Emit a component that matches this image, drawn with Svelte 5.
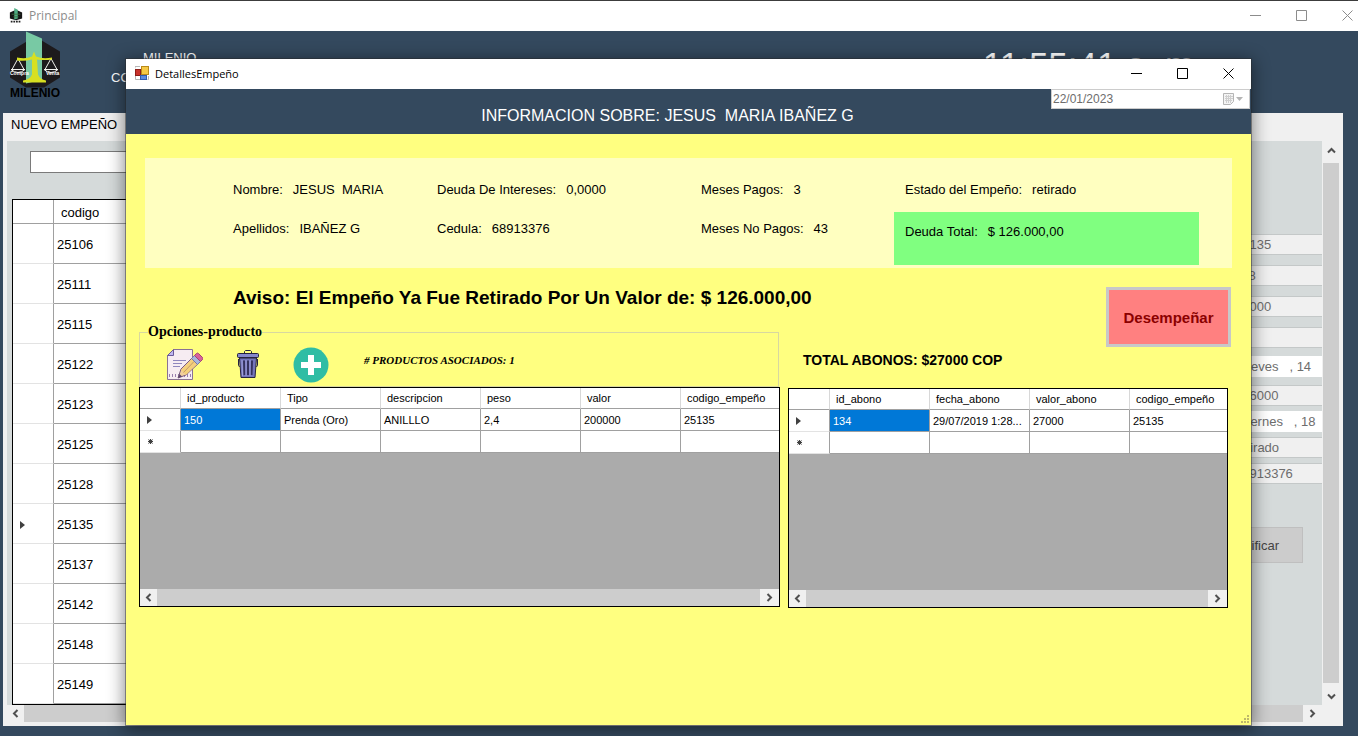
<script>
  const codes = ['25106', '25111', '25115', '25122', '25123', '25125', '25128', '25135', '25137', '25142', '25148', '25149'];
  const current = '25135';

  const fieldGroups = [
    { name: 'wide', fields: [['codigo', '25135'], ['peso', '118'], ['valor', '50000'], ['nota', '']] },
    { name: 'mid', fields: [['fecha inicio', 'jueves   , 14', true], ['deuda', '126000']] },
    { name: 'tight', fields: [['fecha fin', 'viernes   , 18', true], ['estado', 'retirado'], ['cedula', '68913376']] }
  ];

  const firstRow = [
    ['Nombre:', 'JESUS  MARIA'],
    ['Deuda De Intereses:', '0,0000'],
    ['Meses Pagos:', '3'],
    ['Estado del Empeño:', 'retirado']
  ];
  const secondRow = [
    ['Apellidos:', 'IBAÑEZ G'],
    ['Cedula:', '68913376'],
    ['Meses No Pagos:', '43'],
    ['Deuda Total:', '$ 126.000,00']
  ];

  const products = {
    head: ['id_producto', 'Tipo', 'descripcion', 'peso', 'valor', 'codigo_empeño'],
    row: ['150', 'Prenda (Oro)', 'ANILLLO', '2,4', '200000', '25135']
  };
  const payments = {
    head: ['id_abono', 'fecha_abono', 'valor_abono', 'codigo_empeño'],
    row: ['134', '29/07/2019 1:28...', '27000', '25135']
  };
</script>

{#snippet arrow(d)}
  <svg width="9" height="9" viewBox="0 0 9 9" fill="none" stroke="#505050" stroke-width="2"><path {d} /></svg>
{/snippet}

{#snippet hbar()}
  <div class="hbar">
    <button aria-label="Izquierda">{@render arrow('M6.5 1 3 4.500 6.500 8')}</button>
    <div class="thumb"></div>
    <button aria-label="Derecha">{@render arrow('M2.500 1 6 4.500 2.500 8')}</button>
  </div>
{/snippet}

{#snippet controls()}
  <div class="controls">
    <button aria-label="Minimizar"><svg width="11" height="11" viewBox="0 0 11 11" stroke="currentColor" fill="none"><path d="M0 5.500H11" /></svg></button>
    <button aria-label="Maximizar"><svg width="11" height="11" viewBox="0 0 11 11" stroke="currentColor" fill="none"><path d="M.5.5h10v10H.5z" /></svg></button>
    <button aria-label="Cerrar"><svg width="11" height="11" viewBox="0 0 11 11" stroke="currentColor" fill="none"><path d="M.5.5l10 10M10.500.5l-10 10" /></svg></button>
  </div>
{/snippet}

{#snippet marker()}
  <svg class="marker" width="5" height="8" viewBox="0 0 5 8" fill="#404040"><path d="M0 0 5 4 0 8z" /></svg>
{/snippet}

{#snippet grid(data)}
  <div class="datagrid">
    <div class="sheet">
      <table>
        <thead>
          <tr>
            <th class="rowhead" aria-label="Fila"></th>
            {#each data.head as h}<th>{h}</th>{/each}
          </tr>
        </thead>
        <tbody>
          <tr>
            <td class="rowhead">{@render marker()}</td>
            {#each data.row as c, i}<td class:selected={i === 0}>{c}</td>{/each}
          </tr>
          <tr>
            <td class="rowhead">
              <svg class="marker" width="7" height="7" viewBox="0 0 7 7" stroke="#404040" stroke-width="1"><circle cx="3.500" cy="3.500" r="1.500" fill="#404040" /><path d="M3.500 1v5M1 3.500h5M1.500 1.500l4 4M5.500 1.500l-4 4" /></svg>
            </td>
            {#each data.head as h}<td></td>{/each}
          </tr>
        </tbody>
      </table>
    </div>
    {@render hbar()}
  </div>
{/snippet}

{#snippet logo(size)}
  <svg width={size} height={Math.round(size * 1.25)} viewBox="0 0 54 67">
    <path d="M2 20 27 5 52 20V46L36 56H18L2 46z" fill="#1d1a1c" />
    <path d="M18 0 34 7V48L18 52z" fill="#78c9a4" />
    <g stroke="#f2f2ee" fill="none" stroke-width="1">
      <path d="M10 27 4 38M10 27l6 11M43 27l-6 11M43 27l6 11" />
      <path d="M3 38q7 6 14 0zM36 38q7 6 14 0z" />
    </g>
    <path d="M9 26q9 2 15-1l2-5 2 5q7 3 16 1v2q-8 1-15 0l1 15q2 5 8 6v2H15v-2q7-1 9-6l0-15q-7 2-15 1z" fill="#d8e021" />
    <text x="2" y="43" class="logo-side">Compra</text>
    <text x="38" y="43" class="logo-side">Venta</text>
    <text x="27" y="65" class="logo-name" text-anchor="middle">MILENIO</text>
  </svg>
{/snippet}

<div class="desktop">
  <header class="titlebar outer">
    <svg width="14" height="17" viewBox="0 0 16 17">
      <path d="M1 5 8 2 15 5V12L8 14 1 12z" fill="#151515" />
      <path d="M6 0 10 2V12L6 13z" fill="#4fae84" />
      <path d="M3 7h10M5 10h6" stroke="#3f6d40" />
      <path d="M2 15.500h12" stroke="#222" stroke-width="2" stroke-dasharray="2 1" />
    </svg>
    <span>Principal</span>
    {@render controls()}
  </header>

  <div class="banner">
    {@render logo(54)}
    <div class="company"><span>MILENIO</span><span>CO</span></div>
    <div class="clock">11:55:41 a. m.</div>
  </div>

  <main class="page">
    <div class="tab">NUEVO EMPEÑO</div>
    <div class="scroller">
      <div class="area">
        <div class="list">
          <input class="search" aria-label="Buscar" />
          <table class="codes">
            <thead><tr><th class="rowhead" aria-label="Fila"></th><th>codigo</th></tr></thead>
            <tbody>
              {#each codes as code}
                <tr>
                  <td class="rowhead">{#if code === current}{@render marker()}{/if}</td>
                  <td>{code}</td>
                </tr>
              {/each}
            </tbody>
          </table>
        </div>
        <form class="side">
          {#each fieldGroups as g}
            <div class="group {g.name}">
              {#each g.fields as [label, value, date]}
                <input class:date disabled aria-label={label} {value} />
              {/each}
            </div>
          {/each}
          <button type="button" class="modify">Modificar</button>
        </form>
      </div>
      <div class="vbar">
        <button aria-label="Arriba">{@render arrow('M1 6.500 4.500 3 8 6.500')}</button>
        <div class="thumb"></div>
        <button aria-label="Abajo">{@render arrow('M1 2.500 4.500 6 8 2.500')}</button>
      </div>
    </div>
    <div class="page-bar">{@render hbar()}</div>
  </main>

  <section class="dialog" aria-label="DetallesEmpeño">
    <header class="titlebar inner">
      <svg width="14" height="14" viewBox="0 0 14 14">
        <rect x=".5" y="3.500" width="5" height="6" fill="#c8322b" stroke="#8e1d17" />
        <rect x="6.500" y=".5" width="7" height="8" fill="#f6c945" stroke="#b98a1a" />
        <rect x="5.500" y="9.500" width="6" height="4" fill="#5b8be0" stroke="#2f5cb0" />
        <path d="M0 2.500V.5h5M.5 10v3.500H5M13.500 10v3.500h-1" fill="none" stroke="#b5b5b5" />
      </svg>
      <span>DetallesEmpeño</span>
      {@render controls()}
    </header>
    <div class="heading">
      <h1>INFORMACION SOBRE: JESUS&nbsp; MARIA IBAÑEZ G</h1>
      <div class="datepicker">
        <input aria-label="Fecha" disabled value="22/01/2023" />
        <svg width="22" height="12" viewBox="0 0 22 12">
          <path d="M.5.5h10v8l-3 3h-7z" fill="#f4f4f4" stroke="#b5b5b5" />
          <path d="M2 3.500h8M2 5.500h8M2 7.500h7M3.500 2v8M5.500 2v8M7.500 2v8" stroke="#cfcfcf" />
          <path d="M13 4h7l-3.500 4z" fill="#b5b5b5" />
        </svg>
      </div>
    </div>

    <div class="body">
      <div class="info">
        {#each firstRow as [k, v]}
          <div class="fact"><span>{k}</span><span>{v}</span></div>
        {/each}
        {#each secondRow as [k, v], i}
          <div class="fact second" class:total={i === 3}><span>{k}</span><span>{v}</span></div>
        {/each}
      </div>

      <div class="columns">
        <div class="col">
          <h2>Aviso: El Empeño Ya Fue Retirado Por Un Valor de: $ 126.000,00</h2>
          <fieldset>
            <legend>Opciones-producto</legend>
            <button aria-label="Editar producto">
              <svg width="37" height="34" viewBox="0 0 37 34">
                <path d="M7.500 1.500h19v30h-25v-24z" fill="#f6ecf2" stroke="#8a7294" />
                <path d="M7.500 1.500v6h-6z" fill="#bfb6ee" stroke="#6b5a9a" />
                <path d="M7 12.500h13M7 15.500h9M7 18.500h7" stroke="#8f86bd" />
                <path d="M3 27.500h22" stroke="#9a7fae" stroke-width="3" stroke-dasharray="1 2" />
                <path d="M12 30 15 21 28 8l6 6L20 27z" fill="#f2cf9e" stroke="#7b5a80" />
                <path d="M15 22l5 5L31 16l-5-5z" fill="#f4d07c" />
                <path d="M17.500 24.500 28 13.500" stroke="#c39a6c" />
                <path d="M25.500 10.500l3-3 6 6-3 3z" fill="#a9b7dc" stroke="#7478ac" />
                <path d="M28.500 7.500l2-2q1-1 2 0l4 4q1 1 0 2l-2 2z" fill="#d8629a" stroke="#a34374" />
                <path d="M12 30l1.500-4 2.500 2.500z" fill="#5b466e" />
              </svg>
            </button>
            <button aria-label="Eliminar producto">
              <svg width="22" height="29" viewBox="0 0 22 29">
                <path d="M7.500 3V1.500l1-1h5l1 1V3" fill="none" stroke="#26233f" />
                <rect x=".5" y="3.500" width="21" height="4" rx="1" fill="#8587cc" stroke="#26233f" />
                <path d="M2.500 8h17l-1.500 19.500H4z" fill="#7475bb" stroke="#26233f" />
                <path d="M1.500 9v6l1 2M20.500 9v6l-1 2" fill="none" stroke="#26233f" />
                <path d="M7 10.500 7.500 25M11 10.500V25M15 10.500 14.500 25" stroke="#35325f" stroke-width="2" />
                <path d="M5 10l.5 16M9 10v16M13 10v16" stroke="#a0a1dc" />
              </svg>
            </button>
            <button aria-label="Agregar producto">
              <svg width="36" height="36" viewBox="0 0 36 36">
                <circle cx="18" cy="18" r="17.500" fill="#2fbda4" />
                <path d="M18 8V28M8 18H28" stroke="#fff" stroke-width="6" />
              </svg>
            </button>
            <em># PRODUCTOS ASOCIADOS: 1</em>
          </fieldset>
          {@render grid(products)}
        </div>
        <div class="col right">
          <button class="redeem">Desempeñar</button>
          <h3>TOTAL ABONOS: $27000 COP</h3>
          {@render grid(payments)}
        </div>
      </div>
    </div>
    <svg class="grip" width="9" height="9" viewBox="0 0 9 9" fill="#bdb76b"><path d="M6 0h2v2H6zM3 3h2v2H3zM6 3h2v2H6zM0 6h2v2H0zM3 6h2v2H3zM6 6h2v2H6z" /></svg>
  </section>
</div>

<style>
  :global(body) { background: #34495e; }
  * { box-sizing: border-box; }
  button, input { font: inherit; color: inherit; border: 0; padding: 0; margin: 0; background: none; border-radius: 0; }
  svg { display: block; flex: none; }
  h1, h2, h3 { margin: 0; }
  table { border-collapse: separate; border-spacing: 0; table-layout: fixed; }
  th { font-weight: 400; text-align: left; }

  .desktop {
    position: relative;
    display: flex;
    flex-direction: column;
    min-height: 100vh;
    overflow: hidden;
    background: #34495e;
    font-family: "Liberation Sans", Arial, sans-serif;
    font-size: 13px;
    color: #000;
  }

  .titlebar { display: flex; align-items: center; height: 30px; background: #fff; padding: 0 0 2px 9px; font: 12px "Open Sans", "Segoe UI", sans-serif; }
  .titlebar > span { margin-left: 6px; }
  .titlebar.outer { height: 31px; border-top: 1px solid #3c3c3c; color: #8c8c8c; }
  .titlebar.inner { font-size: 11px; }
  .controls { display: flex; margin-left: auto; }
  .controls button { width: 46px; height: 28px; display: grid; place-items: center; }
  .outer .controls { margin-right: -12px; }

  .banner { display: flex; align-items: flex-start; height: 82px; padding: 0 154px 0 8px; color: #fff; }
  .company { display: flex; flex-direction: column; margin: 17px 0 0 49px; line-height: 20px; font-size: 13px; }
  .company span:first-child { margin-left: 32px; }
  .clock { margin: 14px 0 0 auto; font-size: 35px; line-height: 40px; }
  .logo-side { font: 700 5px "Liberation Sans", sans-serif; fill: #fff; }
  .logo-name { font: 700 12px "Liberation Sans", sans-serif; fill: #000; }

  .page { flex: 1; display: flex; flex-direction: column; margin: 0 15px 10px 3px; padding: 0 4px 4px; background: #f0f0f0; }
  .tab { height: 28px; padding-left: 4px; line-height: 24px; }
  .scroller { flex: 1; display: flex; }
  .area { flex: 1; display: flex; justify-content: space-between; background: #d5dada; margin-right: 1px; overflow: hidden; }
  .list { padding: 10px 0 0 5px; }
  .search { display: block; width: 240px; height: 22px; margin: 0 0 26px 18px; border: 1px solid #7a7a7a; background: #fff; }
  .codes { width: 300px; background: #fff; border: 1px solid #000; }
  .codes th { height: 24px; padding: 2px 0 0 7px; border-right: 1px solid #a0a0a0; border-bottom: 1px solid #a0a0a0; }
  .codes td { height: 40px; padding: 2px 0 0 3px; border-right: 1px solid #a0a0a0; border-bottom: 1px solid #a0a0a0; }
  .codes .rowhead { width: 41px; }
  td.rowhead { border-bottom-color: #e3e3e3 !important; }
  .marker { margin-left: 4px; }

  .side { width: 90px; padding-top: 93px; color: #6d6d6d; }
  .group { display: flex; flex-direction: column; }
  .group input { width: 120px; height: 21px; padding-left: 3px; background: #f0f0f0; border: solid #c4c8c8; border-width: 1px 0; white-space: pre; }
  .group input.date { padding-left: 9px; background: #fff; border-color: #fff; }
  .wide { gap: 10px; margin-bottom: 8px; }
  .mid { gap: 8px; margin-bottom: 5px; }
  .tight { gap: 5px; }
  .modify { width: 71px; height: 36px; margin-top: 43px; background: #ccc; border: 1px solid #bfbfbf; color: #444; display: flex; align-items: center; justify-content: flex-end; padding-right: 23px; }

  .vbar { width: 16px; display: flex; flex-direction: column; background: #f0f0f0; }
  .vbar button { height: 22px; display: grid; place-items: center; padding-bottom: 4px; }
  .vbar button:last-child { padding: 4px 0 0; }
  .thumb { flex: 1; background: #cdcdcd; }
  .hbar { display: flex; height: 17px; background: #f0f0f0; }
  .hbar button { width: 17px; display: grid; place-items: center; }
  .hbar button:last-child { width: 19px; }
  .page-bar { padding-right: 17px; }

  .dialog {
    position: absolute;
    inset: 59px 107px 11px 126px;
    display: flex;
    flex-direction: column;
    background: #ffff80;
    box-shadow: 0 0 0 1px rgba(40, 40, 40, 0.45), 0 3px 16px 2px rgba(0, 0, 0, 0.45);
  }
  .heading { position: relative; height: 45px; background: #34495e; color: #fff; padding: 8px 42px 0 0; display: grid; place-items: center; }
  h1 { font-size: 16px; font-weight: 400; line-height: 20px; }
  .datepicker { position: absolute; top: 0; right: 1px; width: 199px; height: 20px; display: flex; align-items: center; background: #fff; border: 1px solid #ccc; color: #6d6d6d; padding: 0 4px 0 1px; font-size: 12px; }
  .datepicker input { flex: 1; min-width: 0; }

  .body { flex: 1; padding: 24px 20px 0 13px; }
  .info {
    display: grid;
    grid-template-columns: 204fr 264fr 193fr 305fr;
    grid-template-rows: 32px 53px;
    margin: 0 -1px 0 6px;
    padding: 22px 33px 3px 88px;
    background: #ffffc0;
  }
  .fact { display: flex; gap: 10px; line-height: 20px; white-space: pre; }
  .fact:nth-child(4n) { padding-left: 11px; }
  .second { padding-top: 7px; }
  .total { padding-top: 10px; background: #80ff80; }

  .columns { display: grid; grid-template-columns: 641fr 443fr; gap: 8px; padding-top: 18px; }
  .col { min-width: 0; }
  h2 { font-size: 19px; line-height: 24px; padding-left: 94px; white-space: nowrap; }
  fieldset { display: flex; align-items: center; height: 62px; margin: 15px 1px 0 0; padding: 4px 0 0 26px; border: 1px solid #d8d8a0; min-width: 0; }
  legend { font: 700 14px/14px "Liberation Serif", serif; padding: 0; margin-left: -18px; }
  fieldset button:nth-of-type(2) { margin: 0 34px; }
  em { font: italic 700 11px/14px "Liberation Serif", serif; margin: 0 0 10px 35px; }
  .right { display: flex; flex-direction: column; padding-right: 3px; }
  .redeem { align-self: flex-end; margin: 1px -3px 0 0; width: 125px; height: 60px; border: 3px solid #c8c8c8; background: #ff8080; color: #8b0000; font-size: 15px; font-weight: 700; }
  h3 { font-size: 14px; line-height: 20px; margin: 3px 0 18px 15px; }

  .datagrid { display: flex; flex-direction: column; height: 220px; border: 1px solid #000; background: #ababab; font-size: 11px; }
  .sheet { flex: 1; overflow: hidden; }
  .datagrid table { width: 1px; background: #fff; }
  .datagrid th { width: 100px; height: 21px; padding: 0 0 0 6px; border-right: 1px solid #d8d8d8; border-bottom: 1px solid #a0a0a0; }
  .datagrid td { height: 22px; padding: 0 0 0 3px; border-right: 1px solid #a0a0a0; border-bottom: 1px solid #a0a0a0; white-space: nowrap; overflow: hidden; }
  .datagrid .rowhead { width: 41px; padding-left: 2px; }
  .datagrid .marker { margin-left: 5px; }
  .datagrid td.selected { background: #0078d7; color: #fff; }
  .grip { position: absolute; right: 1px; bottom: 1px; }
</style>
